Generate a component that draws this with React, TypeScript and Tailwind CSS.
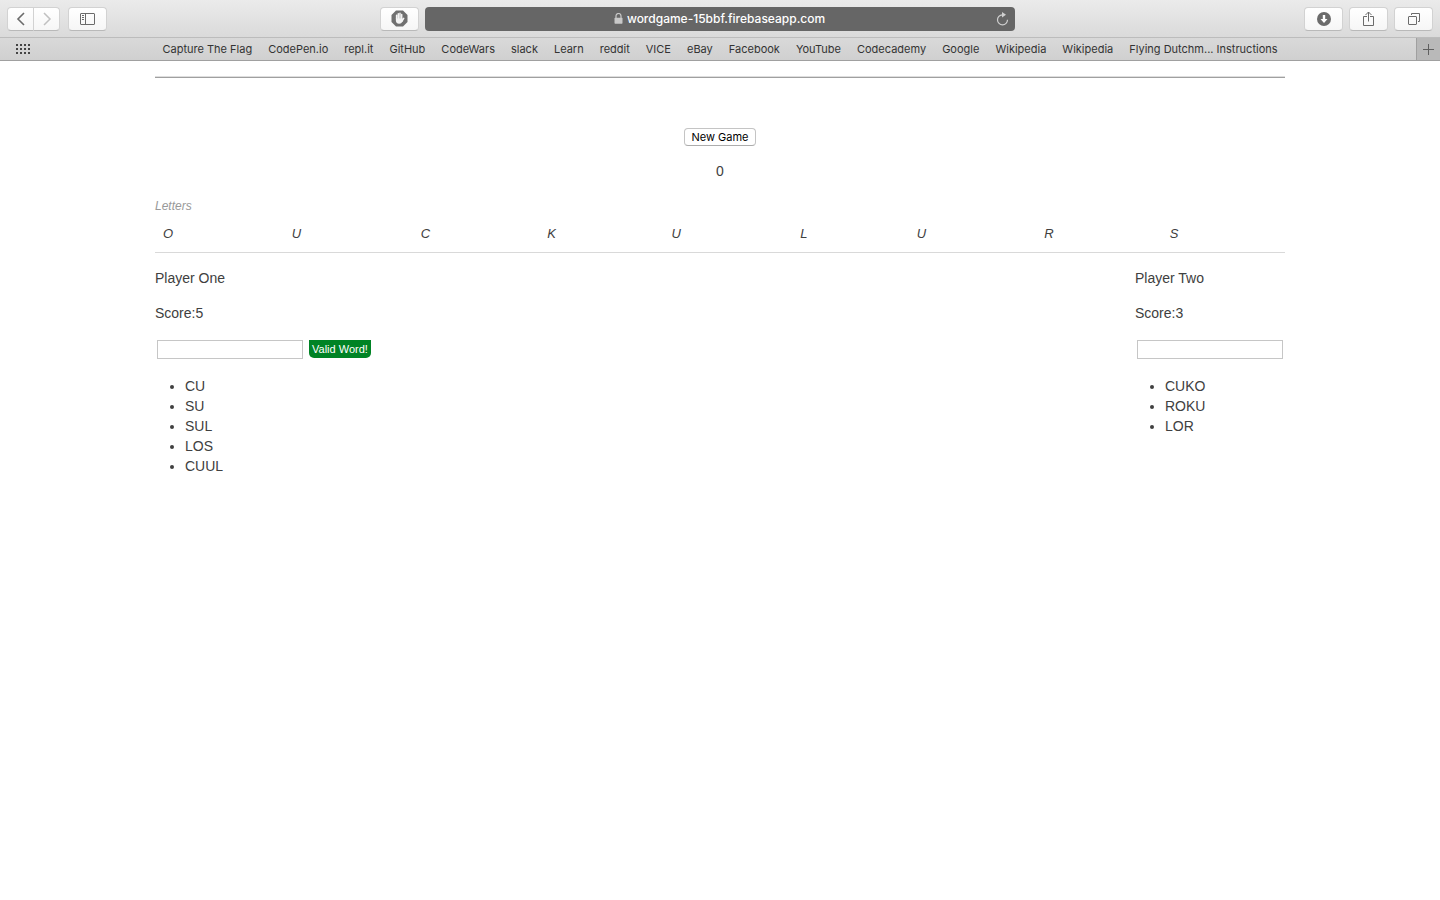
import React from "react";

const bookmarks = [
  "Capture The Flag", "CodePen.io", "repl.it", "GitHub", "CodeWars", "slack", "Learn", "reddit", "VICE",
  "eBay", "Facebook", "YouTube", "Codecademy", "Google", "Wikipedia", "Wikipedia", "Flying Dutchm... Instructions",
];

const letters = ["O", "U", "C", "K", "U", "L", "U", "R", "S"];

const letterColumns = [
  "w-[11.4%]", "w-[11.4%]", "w-[11.2%]", "w-[11%]", "w-[11.4%]", "w-[10.3%]", "w-[11.3%]", "w-[11.1%]", "w-[10.9%]",
];

function ToolButton({ label, className = "w-[39px] rounded", children }: {
  label: string;
  className?: string;
  children: React.ReactNode;
}) {
  return (
    <button
      type="button"
      aria-label={label}
      className={`flex h-6 items-center justify-center border border-[#d2d2d2] border-b-[#b9b9b9] bg-linear-to-b from-white to-[#f6f6f6] ${className}`}
    >
      {children}
    </button>
  );
}

function BrowserChrome() {
  return (
    <header className="font-[Inter,sans-serif]">
      <div className="flex h-[38px] items-center justify-between border-b border-[#bcbcbc] bg-linear-to-b from-[#ebebeb] to-[#dadada] px-[7px]">
        <div className="flex flex-1 items-center">
          <ToolButton label="Back" className="w-[27px] rounded-l">
            <svg width="10" height="14" viewBox="0 0 10 14" fill="none" stroke="#6b6b6b" strokeWidth="1.6">
              <path d="M8 1 2 7l6 6" />
            </svg>
          </ToolButton>
          <ToolButton label="Forward" className="w-[26px] rounded-r border-l-0">
            <svg width="10" height="14" viewBox="0 0 10 14" fill="none" stroke="#c0c0c0" strokeWidth="1.5">
              <path d="m2 1 6 6-6 6" />
            </svg>
          </ToolButton>
          <div className="ml-2">
            <ToolButton label="Show sidebar">
              <svg width="15" height="12" viewBox="0 0 15 12" fill="none" stroke="#6b6b6b">
                <rect x=".5" y=".5" width="14" height="11" rx=".5" />
                <path d="M5.5 0v12M2 2.5h2M2 4.5h2M2 6.5h2" />
              </svg>
            </ToolButton>
          </div>
          <div className="ml-auto mr-[6px]">
            <ToolButton label="Content blocker">
              <svg width="17" height="17" viewBox="0 0 17 17">
                <path d="M5 .5h7L16.500 5v7L12 16.500H5L.5 12V5z" fill="#707070" />
                <g fill="none" stroke="#f3f3f3" strokeWidth="1.500" strokeLinecap="round">
                  <path d="M5.600 5.200V9M7.300 3.700V9M9 3.300V9M10.700 4.500V9M12.700 8.300l-1.800 3" />
                </g>
                <path d="M4.850 8.500h6.600l.3 2.300c-.8 1.800-1.600 2.900-3.600 2.900-2.300 0-3.300-1.500-3.300-3.500z" fill="#f3f3f3" />
              </svg>
            </ToolButton>
          </div>
        </div>
        <div className="flex h-6 w-[41vw] items-center rounded bg-[#666] px-[6px] text-xs font-medium text-white">
          <div className="w-3" />
          <div className="flex flex-1 items-center justify-center gap-1">
            <svg width="9" height="11" viewBox="0 0 9 11">
              <path d="M2 5V3a2.5 2.5 0 0 1 5 0v2" fill="none" stroke="#c8c8c8" strokeWidth="1.2" />
              <rect x=".5" y="4.7" width="8" height="6" rx=".7" fill="#c8c8c8" />
            </svg>
            <span>wordgame-15bbf.firebaseapp.com</span>
          </div>
          <button type="button" aria-label="Reload">
            <svg width="13" height="14" viewBox="0 0 13 14" fill="none" stroke="#cfcfcf" strokeWidth="1.2">
              <path d="M7 2.800H6.300a5 5 0 1 0 5.200 5" />
              <path d="m6 0 4 2.800-4 2.800z" fill="#cfcfcf" stroke="none" />
            </svg>
          </button>
        </div>
        <div className="flex flex-1 items-center justify-end gap-[6px]">
          <ToolButton label="Downloads">
            <svg width="14" height="14" viewBox="0 0 14 14">
              <circle cx="7" cy="7" r="7" fill="#6b6b6b" />
              <path d="M5.800 3h2.400v4h2.300L7 11 3.500 7h2.300z" fill="#fff" />
            </svg>
          </ToolButton>
          <ToolButton label="Share">
            <svg width="11" height="16" viewBox="0 0 11 16" fill="none" stroke="#6b6b6b">
              <path d="M4 5.500H.5v9h10v-9H7M5.500 10.500V1M2.500 4l3-3 3 3" />
            </svg>
          </ToolButton>
          <ToolButton label="Show all tabs">
            <svg width="13" height="12" viewBox="0 0 13 12" fill="none" stroke="#6b6b6b">
              <rect x="1.500" y="3.500" width="8" height="8" rx=".5" />
              <path d="M4.500 2V.5h8v8H11" />
            </svg>
          </ToolButton>
        </div>
      </div>
      <div className="flex h-[23px] items-stretch border-b border-[#a0a0a0] bg-linear-to-b from-[#d9d9d9] to-[#d0d0d0] text-[11px] text-[#333]">
        <button type="button" aria-label="Favorites" className="flex w-6 items-center pl-4">
          <svg width="14" height="10" viewBox="0 0 14 10" className="shrink-0" fill="none" stroke="#444" strokeWidth="2" strokeDasharray="2 2">
            <path d="M0 1h14M0 5h14M0 9h14" />
          </svg>
        </button>
        <nav aria-label="Bookmarks" className="flex flex-1 items-center justify-center gap-4 whitespace-nowrap">
          {bookmarks.map((name, i) => (
            <a key={i} href="#">{name}</a>
          ))}
        </nav>
        <button type="button" aria-label="New tab" className="flex w-6 items-center justify-center border-l border-[#a0a0a0] bg-[#b9b9b9]">
          <svg width="11" height="11" viewBox="0 0 11 11" stroke="#606060">
            <path d="M5.500 0v11M0 5.500h11" />
          </svg>
        </button>
      </div>
    </header>
  );
}

function Player({ name, score, words, message }: {
  name: string;
  score: number;
  words: string[];
  message?: string;
}) {
  return (
    <section aria-label={name}>
      <p className="mb-[15px]">{name}</p>
      <p className="mb-4">Score:{score}</p>
      <div className="flex h-[21px] items-center gap-[6px] px-[2px]">
        <input
          type="text"
          aria-label={`${name} word`}
          className="h-[19px] w-[146px] border border-[#c6c6c6] bg-white px-1 text-[11px] outline-none"
        />
        {message && (
          <span className="h-[18px] rounded-b-[5px] bg-[#008325] px-[3px] text-[11px] leading-[18px] text-white">{message}</span>
        )}
      </div>
      <ul className="mt-4 list-disc pl-[30px]">
        {words.map((word) => (
          <li key={word}>{word}</li>
        ))}
      </ul>
    </section>
  );
}

export default function App() {
  return (
    <div className="min-h-screen bg-white">
      <BrowserChrome />
      <main className="mx-auto max-w-[1130px] pt-[15px] font-['Liberation_Sans',Arial,sans-serif] text-sm text-[#404040]">
        <hr className="h-[2px] border-t border-b border-t-[#dedede] border-b-[#a0a0a0]" />
        <div className="flex flex-col items-center pt-[50px]">
          <button
            type="button"
            className="h-[18px] rounded border border-[#c4c4c4] border-b-[#acacac] bg-white px-[6px] font-[Inter,sans-serif] text-[11px] leading-4 text-black"
          >
            New Game
          </button>
          <p className="mt-[15px]">0</p>
        </div>
        <table className="mt-[17px] w-full table-fixed border-b border-[#d9d9d9] text-left text-[13px] italic">
          <caption className="pb-2 text-left text-xs leading-4 text-[#999]">Letters</caption>
          <colgroup>
            {letterColumns.map((width, i) => (
              <col key={i} className={width} />
            ))}
          </colgroup>
          <tbody>
            <tr>
              {letters.map((letter, i) => (
                <td key={i} className="px-2 pb-2 pt-[3px]">{letter}</td>
              ))}
            </tr>
          </tbody>
        </table>
        <div className="flex justify-between pt-[15px]">
          <Player name="Player One" score={5} words={["CU", "SU", "SUL", "LOS", "CUUL"]} message="Valid Word!" />
          <Player name="Player Two" score={3} words={["CUKO", "ROKU", "LOR"]} />
        </div>
      </main>
    </div>
  );
}
